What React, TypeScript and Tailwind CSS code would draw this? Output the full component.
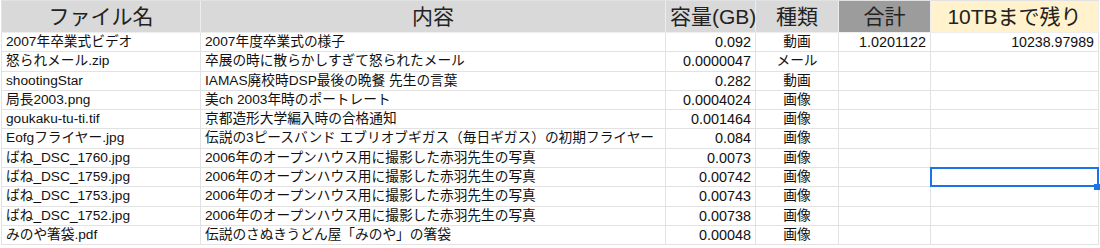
const rows: [string, string, string, string][] = [
  ['2007年卒業式ビデオ', '2007年度卒業式の様子', '0.092', '動画'],
  ['怒られメール.zip', '卒展の時に散らかしすぎて怒られたメール', '0.0000047', 'メール'],
  ['shootingStar', 'IAMAS廃校時DSP最後の晩餐 先生の言葉', '0.282', '動画'],
  ['局長2003.png', '美ch 2003年時のポートレート', '0.0004024', '画像'],
  ['goukaku-tu-ti.tif', '京都造形大学編入時の合格通知', '0.001464', '画像'],
  ['Eofgフライヤー.jpg', '伝説の3ピースバンド エブリオブギガス（毎日ギガス）の初期フライヤー', '0.084', '画像'],
  ['ばね_DSC_1760.jpg', '2006年のオープンハウス用に撮影した赤羽先生の写真', '0.0073', '画像'],
  ['ばね_DSC_1759.jpg', '2006年のオープンハウス用に撮影した赤羽先生の写真', '0.00742', '画像'],
  ['ばね_DSC_1753.jpg', '2006年のオープンハウス用に撮影した赤羽先生の写真', '0.00743', '画像'],
  ['ばね_DSC_1752.jpg', '2006年のオープンハウス用に撮影した赤羽先生の写真', '0.00738', '画像'],
  ['みのや箸袋.pdf', '伝説のさぬきうどん屋「みのや」の箸袋', '0.00048', '画像'],
];

const cell = 'border-r border-b border-[#e2e2e2] px-[4px] whitespace-nowrap';
const head = `${cell} border-[#eeeeee] text-[21px] leading-[31px] text-[#222]`;

export default function App() {
  return (
    <div
      className="w-[1100px] h-[248px] overflow-hidden bg-white text-[#111]"
      style={{ fontFamily: '"Liberation Sans", "Noto Sans CJK JP", sans-serif' }}
    >
      <div className="grid grid-cols-[199px_465px_90px_83px_92px_168px] grid-rows-[32px] auto-rows-[19.3px] border-l border-t border-[#e2e2e2] ml-px w-fit">
        {/* header row */}
        <div className={`${head} bg-[#d9d9d9] text-center`}>ファイル名</div>
        <div className={`${head} bg-[#d9d9d9] text-center`}>内容</div>
        <div className={`${head} bg-[#d9d9d9] text-right`}>容量(GB)</div>
        <div className={`${head} bg-[#d9d9d9] text-center`}>種類</div>
        <div className={`${head} bg-[#9c9c9c] text-center`}>合計</div>
        <div className={`${head} bg-[#fff2cc] text-center`}>10TBまで残り</div>

        {rows.map(([name, desc, size, kind], i) => (
          <div key={name} className="contents text-[13.7px] leading-[18.3px]">
            <div className={`${cell} overflow-hidden`}>{name}</div>
            <div className={`${cell} overflow-hidden`}>{desc}</div>
            <div className={`${cell} text-right text-[14.4px]`}>{size}</div>
            <div className={`${cell} text-center`}>{kind}</div>
            <div className={`${cell} text-right text-[14.4px]`}>{i === 0 ? '1.0201122' : ''}</div>
            <div className={`${cell} relative text-right text-[14.2px]`}>
              {i === 0 ? '10238.97989' : ''}
              {i === 7 && (
                <>
                  <div className="absolute z-10 -left-px -top-px right-[-1px] bottom-[-1px] border-2 border-[#1a73e8]" />
                  <div className="absolute z-20 right-[-2px] bottom-[-4px] w-[6px] h-[6px] bg-[#1a73e8]" />
                </>
              )}
            </div>
          </div>
        ))}
      </div>
    </div>
  );
}
